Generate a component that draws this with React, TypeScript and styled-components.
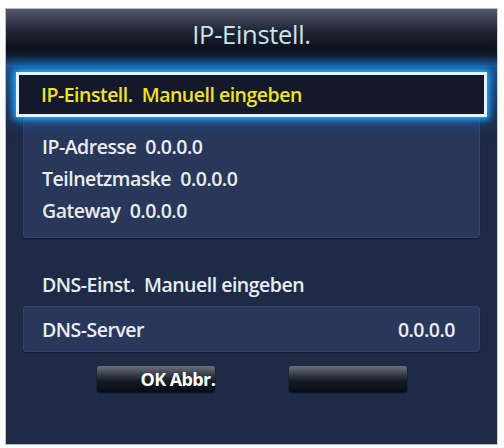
import * as React from "react";
import styled, { createGlobalStyle } from "styled-components";

const GlobalStyle = createGlobalStyle`
  html, body {
    margin: 0;
    padding: 0;
    background: #ffffff;
  }
  body {
    font-family: "Open Sans", "DejaVu Sans", sans-serif;
  }
`;

const Page = styled.div`
  width: 504px;
  height: 448px;
  padding: 8px 6px 5px 5px;
  box-sizing: border-box;
`;

const Dialog = styled.div`
  height: 100%;
  display: flex;
  flex-direction: column;
  background: #1e2a46;
  border: 1px solid #b9bdc4;
  border-right-color: #d0d3d8;
  box-shadow: inset -3px 0 0 #17203a;
  overflow: hidden;
`;

const Header = styled.div`
  height: 58px;
  flex: none;
  display: flex;
  align-items: center;
  justify-content: center;
  padding-bottom: 8px;
  box-sizing: border-box;
  background: linear-gradient(
    to bottom,
    #55596a 0%,
    #22283a 35%,
    #0c111c 68%,
    #0f1c30 80%,
    #1a5c98 100%
  );
`;

const Title = styled.div`
  color: #c8e4ec;
  font-size: 25.5px;
  letter-spacing: -0.3px;
`;

const Body = styled.div`
  flex: 1;
  display: flex;
  flex-direction: column;
  padding: 5px 10px 0 10px;
  background: linear-gradient(to bottom, #1a4c80 0px, #1e2a46 44px);
`;

const FocusRow = styled.div`
  height: 45px;
  box-sizing: border-box;
  display: flex;
  align-items: center;
  padding-left: 22px;
  background: #13182a;
  border: 3px solid #e2f6ff;
  box-shadow: 0 0 6px 2px #2aa8ff, 0 0 14px 4px rgba(20, 130, 230, 0.6);
  position: relative;
  z-index: 1;
`;

const Label = styled.span<{ $color?: string }>`
  color: ${(p) => p.$color ?? "#e9edf2"};
  font-size: 19.5px;
  font-weight: 600;
  letter-spacing: -0.5px;
  white-space: pre;
`;

const Panel = styled.div<{ $height: number }>`
  margin: 0 7px;
  height: ${(p) => p.$height}px;
  box-sizing: border-box;
  background: #29375a;
  border: 1px solid #33426a;
  border-radius: 3px;
  box-shadow: 0 1px 1px rgba(10, 16, 30, 0.5);
`;

const InfoPanel = styled(Panel)`
  display: flex;
  flex-direction: column;
  padding: 12px 0 0 18px;
`;

const InfoLine = styled.div`
  height: 32px;
  display: flex;
  align-items: center;
`;

const Heading = styled.div`
  height: 68px;
  display: flex;
  align-items: flex-end;
  padding: 0 0 8px 26px;
  box-sizing: border-box;
`;

const DnsRow = styled(Panel)`
  display: flex;
  align-items: center;
  justify-content: space-between;
  padding: 0 24px 0 18px;
`;

const Buttons = styled.div`
  display: flex;
  justify-content: center;
  gap: 74px;
  margin-top: 14px;
`;

const Button = styled.div`
  width: 118px;
  height: 26px;
  box-sizing: border-box;
  display: flex;
  align-items: center;
  padding-left: 44px;
  border-radius: 3px;
  background: linear-gradient(
    to bottom,
    #6b707c 0%,
    #3a404c 30%,
    #141922 60%,
    #080b12 100%
  );
  box-shadow: 0 1px 2px rgba(0, 0, 0, 0.6);
  color: #ffffff;
  font-size: 18px;
  font-weight: 700;
  letter-spacing: -0.6px;
  white-space: nowrap;
`;

export default function App() {
  return (
    <>
      <GlobalStyle />
      <Page>
        <Dialog>
          <Header>
            <Title>IP-Einstell.</Title>
          </Header>
          <Body>
            <FocusRow>
              <Label $color="#eee22a">{"IP-Einstell.  Manuell eingeben"}</Label>
            </FocusRow>
            <InfoPanel $height={121}>
              <InfoLine>
                <Label>{"IP-Adresse  0.0.0.0"}</Label>
              </InfoLine>
              <InfoLine>
                <Label>{"Teilnetzmaske  0.0.0.0"}</Label>
              </InfoLine>
              <InfoLine>
                <Label>{"Gateway  0.0.0.0"}</Label>
              </InfoLine>
            </InfoPanel>
            <Heading>
              <Label>{"DNS-Einst.  Manuell eingeben"}</Label>
            </Heading>
            <DnsRow $height={46}>
              <Label>DNS-Server</Label>
              <Label>0.0.0.0</Label>
            </DnsRow>
            <Buttons>
              <Button>OK Abbr.</Button>
              <Button />
            </Buttons>
          </Body>
        </Dialog>
      </Page>
    </>
  );
}
